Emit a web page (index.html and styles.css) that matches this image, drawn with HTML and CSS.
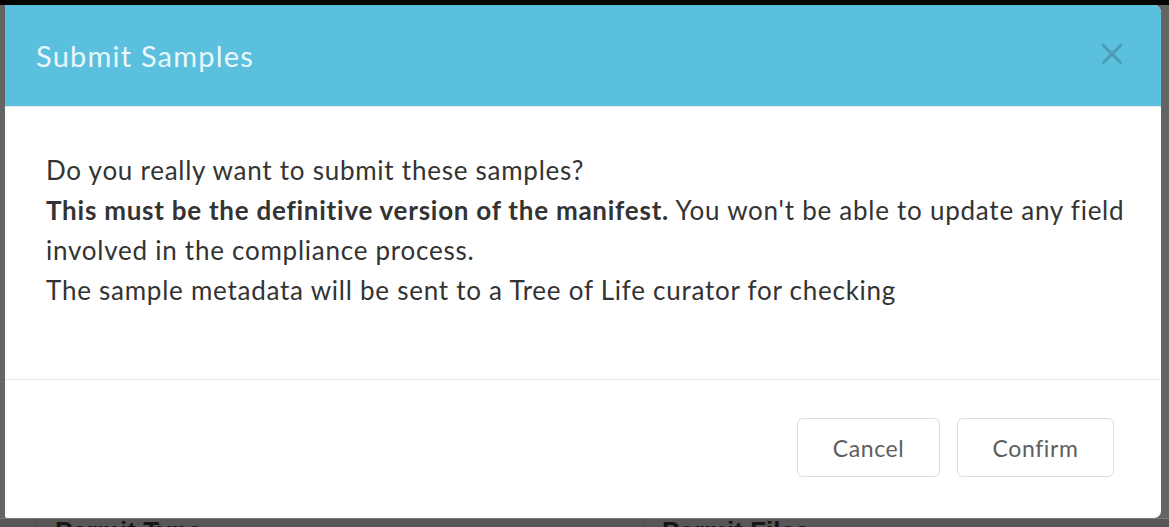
FILE: index.html
```html
<!DOCTYPE html>
<html>
<head>
<meta charset="utf-8">
<link rel="stylesheet" href="styles.css">
</head>
<body>
<div class="page">
  <div class="topbar"></div>
  <div class="under">
    <div class="under-row">
      <div class="under-col first"><h3>Permit Type</h3></div>
      <div class="under-col"><h3>Permit Files</h3></div>
    </div>
  </div>
  <div class="modal">
    <div class="modal-header">
      <h2 class="modal-title">Submit Samples</h2>
      <span class="close">
        <svg width="24" height="24" viewBox="0 0 24 24"><path d="M2.5 2.5 L21.5 21.5 M21.5 2.5 L2.5 21.5" stroke="#4a9bb3" stroke-width="3" fill="none"/></svg>
      </span>
    </div>
    <div class="modal-body">
      <p>Do you really want to submit these samples?</p>
      <p><strong>This must be the definitive version of the manifest.</strong> You won't be able to update any field involved in the compliance process.</p>
      <p>The sample metadata will be sent to a Tree of Life curator for checking</p>
    </div>
    <div class="modal-footer">
      <button class="btn btn-cancel">Cancel</button>
      <button class="btn btn-confirm">Confirm</button>
    </div>
  </div>
</div>
</body>
</html>
```
FILE: styles.css
```css
html, body {
  margin: 0;
  padding: 0;
  width: 1169px;
  height: 527px;
  overflow: hidden;
  background: #646464;
  font-family: Lato, "Open Sans", sans-serif;
}
.page {
  position: relative;
  width: 1169px;
  height: 527px;
  display: flex;
  flex-direction: column;
}
.topbar {
  height: 5px;
  background: #050505;
}
.under {
  flex: 1;
  background: #646464;
  display: flex;
  flex-direction: column;
  justify-content: flex-end;
}
.under-row {
  display: flex;
  height: 8px;
  border-top: 1px solid #7a7a7a;
  background: #575757;
  overflow: hidden;
}
.under-col {
  flex-shrink: 0;
  width: 588px;
  padding-left: 18px;
  border-left: 1px solid #4c4c4c;
}
.under-col.first {
  margin-left: 36px;
}
.under-col h3 {
  margin: -1px 0 0;
  line-height: 26px;
  font-family: "Liberation Sans", sans-serif;
  font-weight: bold;
  font-size: 26px;
  color: #161616;
  white-space: nowrap;
}
.modal {
  position: absolute;
  left: 5px;
  top: 5px;
  width: 1156px;
  background: #fff;
  border-radius: 2px 7px 7px 2px;
  overflow: hidden;
}
.modal-header {
  height: 102px;
  box-sizing: border-box;
  background: #5bc0de;
  border-bottom: 1px solid #e5e5e5;
  display: flex;
  align-items: center;
  justify-content: space-between;
  padding: 0 37px 0 31px;
}
.modal-title {
  margin: 0;
  font-weight: 400;
  font-size: 29px;
  color: #eaf7fb;
  letter-spacing: 1.2px;
}
.close {
  display: flex;
  width: 24px;
  height: 24px;
  margin-top: -4px;
}
.modal-body {
  padding: 43px 20px 69px 41px;
  border-bottom: 1px solid #e5e5e5;
  font-size: 26px;
  letter-spacing: 0.75px;
  line-height: 40px;
  color: #333;
}
.modal-body p {
  margin: 0;
}
.modal-body strong {
  font-weight: 700;
}
.modal-footer {
  display: flex;
  justify-content: flex-end;
  gap: 17px;
  padding: 38px 47px 41px 0;
}
.btn {
  font-family: Lato, sans-serif;
  font-size: 23px;
  letter-spacing: 0.6px;
  color: #5e5e5e;
  background: #fff;
  border: 1.5px solid #dcdcdc;
  border-radius: 6px;
  height: 59px;
  padding: 0;
}
.btn-cancel { width: 143px; }
.btn-confirm { width: 157px; }
```
